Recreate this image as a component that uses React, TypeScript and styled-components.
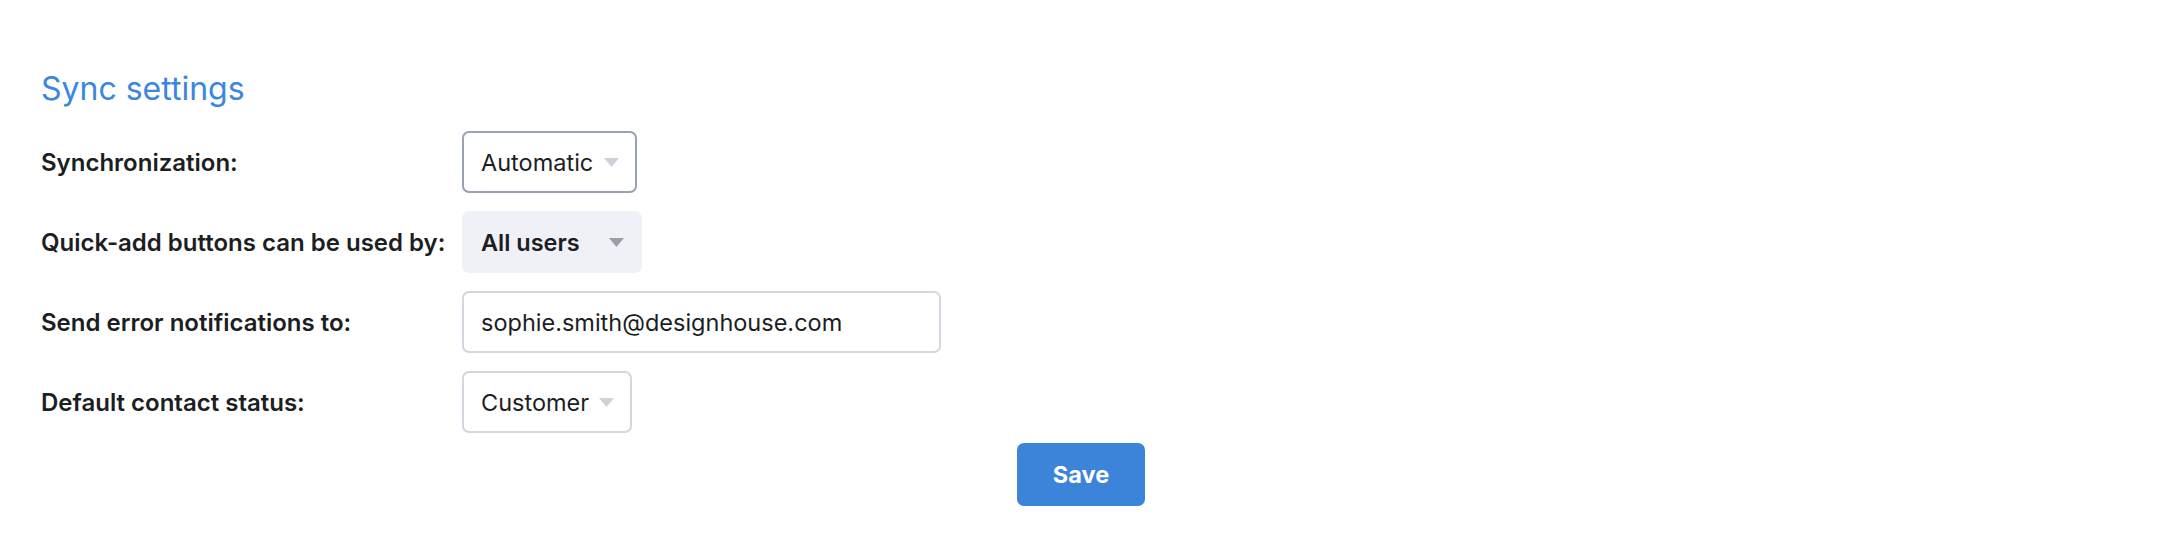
import React from "react";
import styled, { createGlobalStyle } from "styled-components";

const GlobalStyle = createGlobalStyle`
  * {
    box-sizing: border-box;
  }
  body {
    margin: 0;
    background: #ffffff;
    font-family: Inter, "Noto Sans", sans-serif;
    color: #1e2026;
  }
`;

const Arrow = ({ color }: { color: string }) => (
  <svg width="15" height="9" viewBox="0 0 15 9">
    <path d="M0 0 H15 L7.5 9 Z" fill={color} />
  </svg>
);

export default function App() {
  return (
    <>
      <GlobalStyle />
      <Page>
        <Title>Sync settings</Title>
        <Form>
          <Label>Synchronization:</Label>
          <Select $variant="outlined" $width="175px">
            <span>Automatic</span>
            <Arrow color="#cdd1da" />
          </Select>

          <Label>Quick-add buttons can be used by:</Label>
          <Select $variant="filled" $width="180px">
            <span>All users</span>
            <Arrow color="#9a9ea8" />
          </Select>

          <Label>Send error notifications to:</Label>
          <Field defaultValue="sophie.smith@designhouse.com" />

          <Label>Default contact status:</Label>
          <Select $variant="plain" $width="170px">
            <span>Customer</span>
            <Arrow color="#cdd1da" />
          </Select>
        </Form>
        <Actions>
          <SaveButton type="button">Save</SaveButton>
        </Actions>
      </Page>
    </>
  );
}

const Page = styled.div`
  padding: 70px 49px 0 41px;
`;

const Title = styled.h2`
  margin: 0 0 23px;
  font-size: 32px;
  font-weight: 400;
  line-height: 38px;
  color: #3b87dd;
`;

const Form = styled.div`
  display: grid;
  grid-template-columns: 421px auto;
  justify-content: start;
  align-items: center;
  row-gap: 18px;
`;

const Label = styled.label`
  font-size: 24px;
  font-weight: 600;
  color: #1c1e24;
`;

const Select = styled.div<{ $variant: "outlined" | "filled" | "plain"; $width: string }>`
  width: ${(p) => p.$width};
  height: 62px;
  display: flex;
  align-items: center;
  justify-content: space-between;
  padding: 0 16px 0 17px;
  border-radius: 7px;
  font-size: 23.5px;
  font-weight: ${(p) => (p.$variant === "filled" ? 600 : 400)};
  color: #1c1e24;
  background: ${(p) => (p.$variant === "filled" ? "#f0f1f6" : "#ffffff")};
  border: 2px solid
    ${(p) =>
      p.$variant === "outlined"
        ? "#9aa3b3"
        : p.$variant === "plain"
        ? "#d3d7e2"
        : "transparent"};
`;

const Field = styled.input`
  width: 479px;
  height: 62px;
  padding: 0 17px;
  border: 2px solid #d3d7e2;
  border-radius: 7px;
  font-family: Inter, "Noto Sans", sans-serif;
  font-size: 23.5px;
  color: #1c1e24;
  outline: none;
`;

const Actions = styled.div`
  display: flex;
  justify-content: center;
  margin-top: 10px;
`;

const SaveButton = styled.button`
  width: 128px;
  height: 63px;
  border: none;
  border-radius: 7px;
  background: #3b84d9;
  color: #ffffff;
  font-family: Inter, "Noto Sans", sans-serif;
  font-size: 23.5px;
  font-weight: 700;
  cursor: pointer;
`;
